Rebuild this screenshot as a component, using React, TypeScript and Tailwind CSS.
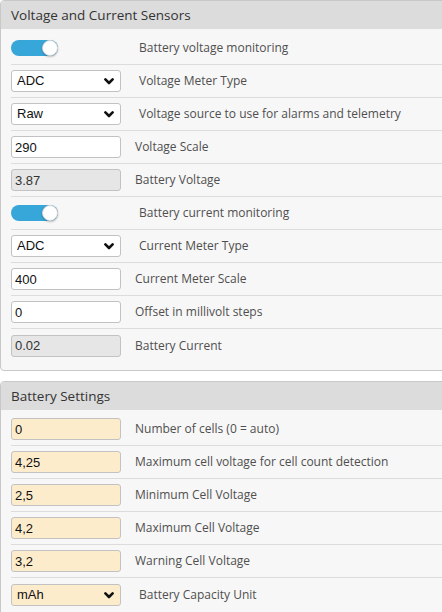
import React from "react";

type Row =
  | { kind: "toggle"; label: string }
  | { kind: "select"; value: string; label: string; warm?: boolean }
  | { kind: "input"; value: string; label: string; warm?: boolean; disabled?: boolean };

const sensorRows: Row[] = [
  { kind: "toggle", label: "Battery voltage monitoring" },
  { kind: "select", value: "ADC", label: "Voltage Meter Type" },
  { kind: "select", value: "Raw", label: "Voltage source to use for alarms and telemetry" },
  { kind: "input", value: "290", label: "Voltage Scale" },
  { kind: "input", value: "3.87", label: "Battery Voltage", disabled: true },
  { kind: "toggle", label: "Battery current monitoring" },
  { kind: "select", value: "ADC", label: "Current Meter Type" },
  { kind: "input", value: "400", label: "Current Meter Scale" },
  { kind: "input", value: "0", label: "Offset in millivolt steps" },
  { kind: "input", value: "0.02", label: "Battery Current", disabled: true },
];

const batteryRows: Row[] = [
  { kind: "input", value: "0", label: "Number of cells (0 = auto)", warm: true },
  { kind: "input", value: "4,25", label: "Maximum cell voltage for cell count detection", warm: true },
  { kind: "input", value: "2,5", label: "Minimum Cell Voltage", warm: true },
  { kind: "input", value: "4,2", label: "Maximum Cell Voltage", warm: true },
  { kind: "input", value: "3,2", label: "Warning Cell Voltage", warm: true },
  { kind: "select", value: "mAh", label: "Battery Capacity Unit", warm: true },
];

function Toggle() {
  return (
    <div className="relative h-[16px] w-[47px] rounded-full bg-[#37a6d9]">
      <div className="absolute right-0 top-0 h-[16px] w-[16px] rounded-full border border-[#d6d6d6] bg-white shadow-[0_1px_2px_rgba(0,0,0,0.25)]" />
    </div>
  );
}

function Chevron() {
  return (
    <svg width="10" height="7" viewBox="0 0 10 7" className="pointer-events-none absolute right-[7px] top-[8px]">
      <path d="M1.4 1.4 L5 5 L8.6 1.4" fill="none" stroke="#111" strokeWidth="2.6" strokeLinecap="round" strokeLinejoin="round" />
    </svg>
  );
}

const field =
  "h-[22px] w-[110px] rounded-[3px] border border-[#c2c2c2] px-[3px] text-[13px] text-[#111] outline-none [font-family:'Liberation_Sans',Arial,sans-serif]";

function SettingRow({ row, last }: { row: Row; last: boolean }) {
  return (
    <div className={`flex h-[33px] items-center ${last ? "" : "border-b border-[#dcdcdc]"}`}>
      {row.kind === "toggle" && (
        <>
          <div className="flex w-[110px]">
            <Toggle />
          </div>
          <span className="ml-[18px]">{row.label}</span>
        </>
      )}
      {row.kind === "select" && (
        <>
          <div className="relative">
            <select
              defaultValue={row.value}
              className={`${field} appearance-none pl-[5px] ${row.warm ? "bg-[#fdeccc]" : "bg-white"}`}
            >
              <option>{row.value}</option>
            </select>
            <Chevron />
          </div>
          <span className="ml-[18px]">{row.label}</span>
        </>
      )}
      {row.kind === "input" && (
        <>
          <input
            readOnly
            value={row.value}
            className={`${field} ${row.disabled ? "bg-[#e6e6e6] text-[#333]" : row.warm ? "bg-[#fdeccc]" : "bg-white"}`}
          />
          <span className="ml-[14px]">{row.label}</span>
        </>
      )}
    </div>
  );
}

function Panel({ title, rows, className = "" }: { title: string; rows: Row[]; className?: string }) {
  return (
    <div className={`w-[450px] rounded-t-[4px] border border-[#c8c8c8] bg-[#f7f7f7] ${className}`}>
      <div className="flex h-[28px] items-center rounded-t-[4px] bg-[#dcdcdc] px-[10px] text-[13.5px] text-[#333]">
        {title}
      </div>
      <div className="pb-[8px] pl-[10px] pt-[3px] text-[12px] text-[#4f4f4f]">
        {rows.map((row, i) => (
          <SettingRow key={i} row={row} last={i === rows.length - 1} />
        ))}
      </div>
    </div>
  );
}

export default function App() {
  return (
    <div className="h-[612px] w-[442px] overflow-hidden bg-white [font-family:'Open_Sans',sans-serif]">
      <Panel title="Voltage and Current Sensors" rows={sensorRows} className="rounded-b-[4px]" />
      <Panel title="Battery Settings" rows={batteryRows} className="mt-[10px]" />
    </div>
  );
}
